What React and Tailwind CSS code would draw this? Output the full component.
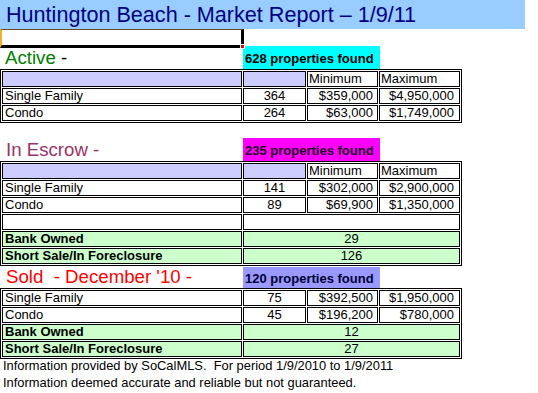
import React from "react";

const base = "border border-black h-[16px] text-[13px] leading-[14px] overflow-hidden whitespace-nowrap";

function A({ children, className = "" }) {
  return <div className={`${base} w-[240px] px-[2px] ${className}`}>{children}</div>;
}
function B({ children, className = "" }) {
  return <div className={`${base} w-[63px] text-center ${className}`}>{children}</div>;
}
function C({ children, className = "" }) {
  return <div className={`${base} w-[71px] pl-[1px] pr-[4px] ${className}`}>{children}</div>;
}
function D({ children, className = "" }) {
  return <div className={`${base} w-[81px] pl-[1px] pr-[5px] ${className}`}>{children}</div>;
}
function BCD({ children, className = "" }) {
  return <div className={`${base} w-[217px] text-center ${className}`}>{children}</div>;
}

function Table({ children }) {
  return (
    <div className="w-[462px] border border-black p-px flex flex-col gap-px">{children}</div>
  );
}
function Row({ children }) {
  return <div className="flex gap-px">{children}</div>;
}

function HeaderRow() {
  return (
    <Row>
      <A className="bg-[#ccccff]" />
      <B className="bg-[#ccccff]" />
      <C className="text-left">Minimum</C>
      <D className="text-left">Maximum</D>
    </Row>
  );
}

function DataRow({ label, n, min, max }) {
  return (
    <Row>
      <A>{label}</A>
      <B>{n}</B>
      <C className="text-right">{min}</C>
      <D className="text-right">{max}</D>
    </Row>
  );
}

function GreenRow({ label, n }) {
  return (
    <Row>
      <A className="bg-[#ccffcc] font-bold">{label}</A>
      <BCD className="bg-[#ccffcc]">{n}</BCD>
    </Row>
  );
}

export default function App() {
  return (
    <div className="relative w-[538px] h-[393px] bg-white overflow-hidden font-['Liberation_Sans',Arial,sans-serif] text-black">
      <div className="h-[29px] w-[525px] bg-[#99ccff] text-[21.6px] leading-[30px] text-[#000080] pl-[6px] whitespace-nowrap">
        Huntington Beach - Market Report – 1/9/11
      </div>

      <div className="relative z-10 h-[19px] -mb-[2px] w-[244px] border-t border-t-[#6b4a1a] border-l-2 border-l-[#f0b030] border-r-[3px] border-b-[3px] border-r-black border-b-black bg-white">
        <div className="absolute -right-[4px] -bottom-[4px] w-[5px] h-[5px] bg-[#e00000] border border-white"></div>
      </div>

      <div className="flex items-end h-[23px]">
        <div className="w-[243px] pl-[5px] text-[18.67px] leading-[22px] text-[#008000] whitespace-pre">
          Active <span className="text-black">-</span>
        </div>
        <div className="w-[137px] h-[23px] bg-[#00ffff] flex items-end pl-[2px] pb-[2px] text-[13px] leading-[16px] font-bold">
          628 properties found
        </div>
      </div>

      <Table>
        <HeaderRow />
        <DataRow label="Single Family" n="364" min="$359,000" max="$4,950,000" />
        <DataRow label="Condo" n="264" min="$63,000" max="$1,749,000" />
      </Table>

      <div className="h-[15px]"></div>

      <div className="flex items-end h-[23px]">
        <div className="w-[243px] pl-[6px] text-[18.67px] leading-[22px] text-[#993366] whitespace-pre">
          In Escrow -
        </div>
        <div className="w-[137px] h-[23px] bg-[#ff00ff] flex items-end pl-[2px] pb-[2px] text-[13px] leading-[16px] font-bold text-[#1a001a]">
          235 properties found
        </div>
      </div>

      <Table>
        <HeaderRow />
        <DataRow label="Single Family" n="141" min="$302,000" max="$2,900,000" />
        <DataRow label="Condo" n="89" min="$69,900" max="$1,350,000" />
        <Row>
          <A />
          <BCD />
        </Row>
        <GreenRow label="Bank Owned" n="29" />
        <GreenRow label="Short Sale/In Foreclosure" n="126" />
      </Table>

      <div className="flex items-end h-[22px]">
        <div className="w-[243px] pl-[6px] text-[18.67px] leading-[22px] text-[#ff0000] whitespace-pre">
          Sold  - December '10 -
        </div>
        <div className="w-[137px] h-[21px] bg-[#9999ff] flex items-end pl-[2px] pb-[1px] text-[13px] leading-[16px] font-bold text-[#000033]">
          120 properties found
        </div>
      </div>

      <Table>
        <DataRow label="Single Family" n="75" min="$392,500" max="$1,950,000" />
        <DataRow label="Condo" n="45" min="$196,200" max="$780,000" />
        <GreenRow label="Bank Owned" n="12" />
        <GreenRow label="Short Sale/In Foreclosure" n="27" />
      </Table>

      <div className="-mt-[2px] pl-[3px] text-[12.9px] leading-[17px] whitespace-pre">
        <div>Information provided by SoCalMLS.  For period 1/9/2010 to 1/9/2011</div>
        <div>Information deemed accurate and reliable but not guaranteed.</div>
      </div>
    </div>
  );
}
